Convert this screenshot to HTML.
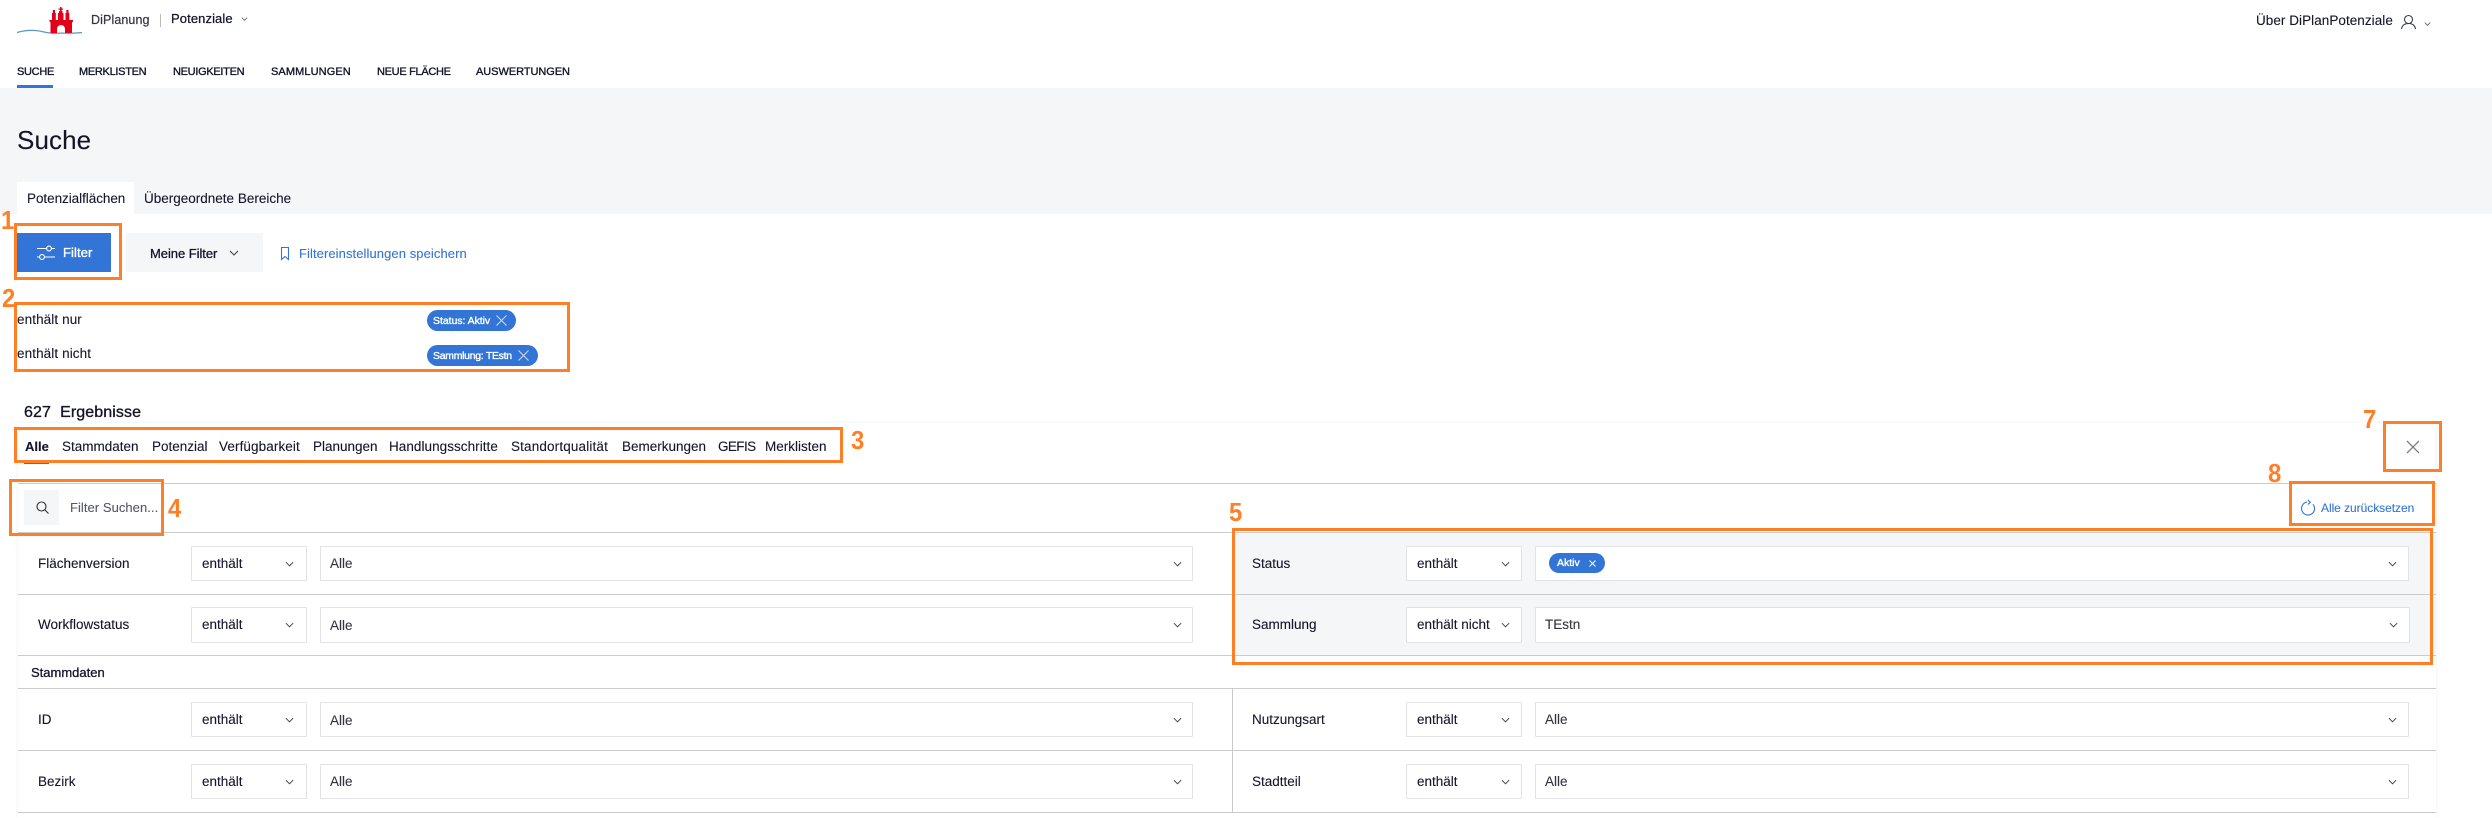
<!DOCTYPE html>
<html lang="de"><head><meta charset="utf-8"><title>Suche</title>
<style>
*{box-sizing:border-box}
html,body{margin:0;padding:0;background:#fff}
body{width:2492px;height:813px;position:relative;overflow:hidden;font-family:"Liberation Sans",sans-serif;color:#14152a;font-size:13.5px}
.a{position:absolute}
.t{position:absolute;white-space:nowrap;line-height:20px;height:20px;-webkit-text-stroke:.1px currentColor}
.nav{font-size:11px;-webkit-text-stroke:.35px #14152a;letter-spacing:-.3px}
.line{position:absolute;height:1px;background:#cbcbcb;left:18px;width:2418px}
.box{position:absolute;background:#fff;border:1px solid #e2e3e4;border-radius:1px}
.or{position:absolute;border:3px solid #ff7f27}
.n{position:absolute;color:#ff7f27;font-weight:700;font-size:26px;line-height:26px;white-space:nowrap;transform:scaleX(.92);transform-origin:left}
.chip{position:absolute;background:#3375d7;color:#fff;border-radius:11px}
svg.i{position:absolute;overflow:visible}
.g{color:#33343f}
</style></head><body>
<svg width="0" height="0" style="position:absolute"><defs><symbol id="c" viewBox="0 0 10 6"><path d="M1 1l4 4 4-4" fill="none" stroke="#444" stroke-width="1.1"/></symbol></defs></svg>

<!-- header -->
<div class="a" style="left:0;top:0;width:2492px;height:88px;background:#fff"></div>
<svg class="i" style="left:0;top:0" width="90" height="40" viewBox="0 0 90 40">
<path d="M17 32.500C24 30.500 32 30 38 30.800C45 32 49 33.500 56 33.300C64 32.800 74 33.800 82 32.500" fill="none" stroke="#5b93cc" stroke-width="1.200"/>
<path fill="#e2001a" d="M49.500 20h23.500v1.500l-1 1V33H65v-4a4 4 0 0 0-8 0v4H50.500V22.500l-1-1zM52 13h3.800v7H52zM58 13h5.500v7H58zM65.500 13h3.800v7h-3.800zM60 7h1.600v6.500H60zM58.500 8.500h4.600v1.300h-4.600zM52.800 10h2.200v3h-2.200zM66.300 10h2.200v3h-2.200zM59 11h3.500v2H59z"/>
</svg>
<span class="t g" style="left:91px;top:10px;font-size:12.5px;-webkit-text-stroke:.2px #33343f;letter-spacing:.1px">DiPlanung</span>
<div class="a" style="left:160px;top:14px;width:1px;height:13px;background:#bbb"></div>
<span class="t" style="left:171px;top:9px;font-size:13px;-webkit-text-stroke:.25px #14152a;letter-spacing:.1px">Potenziale</span>
<svg class="i" style="left:241px;top:17px" width="7" height="4"><use href="#c"/></svg>
<span class="t" style="left:2256px;top:11px;font-size:13.5px;letter-spacing:.05px">Über DiPlanPotenziale</span>
<svg class="i" style="left:2400px;top:14px" width="17" height="16" viewBox="0 0 17 16"><circle cx="8.5" cy="5.5" r="4" fill="none" stroke="#3a3b4d" stroke-width="1.1"/><path d="M1.5 15c.5-3.5 3-5.5 7-5.500s6.500 2 7 5.500" fill="none" stroke="#3a3b4d" stroke-width="1.1"/></svg>
<svg class="i" style="left:2424px;top:22px" width="7" height="4"><use href="#c"/></svg>

<span class="t nav" style="left:17px;top:62px">SUCHE</span>
<span class="t nav" style="left:79px;top:62px">MERKLISTEN</span>
<span class="t nav" style="left:173px;top:62px">NEUIGKEITEN</span>
<span class="t nav" style="left:271px;top:62px;letter-spacing:.1px">SAMMLUNGEN</span>
<span class="t nav" style="left:377px;top:62px">NEUE FLÄCHE</span>
<span class="t nav" style="left:476px;top:62px;letter-spacing:-.05px">AUSWERTUNGEN</span>
<div class="a" style="left:17px;top:85px;width:36px;height:3px;background:#3375d7"></div>

<!-- gray band -->
<div class="a" style="left:0;top:88px;width:2492px;height:126px;background:#f5f6f8"></div>
<span class="t" style="left:17px;top:127px;font-size:26px;line-height:26px;height:26px;letter-spacing:.1px">Suche</span>
<div class="a" style="left:17px;top:182px;width:117px;height:32px;background:#fff"></div>
<span class="t" style="left:27px;top:189px;font-size:13.5px;letter-spacing:-.05px">Potenzialflächen</span>
<span class="t" style="left:144px;top:189px;font-size:13.5px">Übergeordnete Bereiche</span>

<!-- filter buttons -->
<div class="a" style="left:17px;top:233px;width:94px;height:39px;background:#3375d7"></div>
<svg class="i" style="left:37px;top:245px" width="18" height="15" viewBox="0 0 18 15"><g fill="none" stroke="#fff" stroke-width="1.1"><path d="M0 3.500h9.500M14.500 3.500H18M0 12h2.500M7.500 12H18"/><circle cx="12" cy="3.500" r="2.400"/><circle cx="5" cy="12" r="2.400"/></g></svg>
<span class="t" style="left:63px;top:243px;color:#fff;font-size:13px;-webkit-text-stroke:.35px #fff;letter-spacing:.1px">Filter</span>
<div class="a" style="left:126px;top:233px;width:137px;height:39px;background:#f5f6f8"></div>
<span class="t" style="left:150px;top:244px;font-size:13px;-webkit-text-stroke:.3px #14152a;letter-spacing:-.05px">Meine Filter</span>
<svg class="i" style="left:229px;top:250px" width="10" height="6"><use href="#c"/></svg>
<svg class="i" style="left:280px;top:247px" width="10" height="13" viewBox="0 0 10 13"><path d="M1.500.5h7v12L5 9.500 1.500 12.500z" fill="none" stroke="#3375d7" stroke-width="1.1"/></svg>
<span class="t" style="left:299px;top:244px;color:#3375d7;font-size:13px;letter-spacing:.08px">Filtereinstellungen speichern</span>

<!-- active filter summary -->
<span class="t" style="left:17px;top:310px;letter-spacing:.1px">enthält nur</span>
<span class="t" style="left:17px;top:344px;letter-spacing:.1px">enthält nicht</span>
<div class="chip" style="left:427px;top:310px;width:89px;height:21px"></div>
<span class="t" style="left:433px;top:311px;color:#fff;font-size:10.500px;-webkit-text-stroke:.35px #fff;letter-spacing:-.05px">Status: Aktiv</span>
<svg class="i" style="left:496px;top:315px" width="11" height="11" viewBox="0 0 11 11"><path d="M.5.5l10 10M10.500.5l-10 10" stroke="#cfdcf2" fill="none"/></svg>
<div class="chip" style="left:427px;top:345px;width:111px;height:21px"></div>
<span class="t" style="left:433px;top:346px;color:#fff;font-size:10.500px;-webkit-text-stroke:.35px #fff;letter-spacing:-.3px">Sammlung: TEstn</span>
<svg class="i" style="left:518px;top:350px" width="11" height="11" viewBox="0 0 11 11"><path d="M.5.5l10 10M10.500.5l-10 10" stroke="#cfdcf2" fill="none"/></svg>

<span class="t" style="left:24px;top:403px;font-size:16px;-webkit-text-stroke:.35px #14152a;letter-spacing:.1px">627&nbsp; Ergebnisse</span>

<!-- panel -->
<div class="a" style="left:18px;top:423px;width:2418px;height:395px;background:#fff;box-shadow:0 0 4px rgba(0,0,0,.07)"></div>
<span class="t" style="left:25px;top:437px;font-weight:700;font-size:13px">Alle</span>
<span class="t" style="left:62px;top:437px">Stammdaten</span>
<span class="t" style="left:152px;top:437px">Potenzial</span>
<span class="t" style="left:219px;top:437px;letter-spacing:.1px">Verfügbarkeit</span>
<span class="t" style="left:313px;top:437px">Planungen</span>
<span class="t" style="left:389px;top:437px;letter-spacing:.05px">Handlungsschritte</span>
<span class="t" style="left:511px;top:437px;letter-spacing:.15px">Standortqualität</span>
<span class="t" style="left:622px;top:437px">Bemerkungen</span>
<span class="t" style="left:718px;top:437px;letter-spacing:-.6px">GEFIS</span>
<span class="t" style="left:765px;top:437px">Merklisten</span>
<div class="a" style="left:24px;top:462px;width:25px;height:2px;background:#3375d7"></div>

<div class="line" style="top:483px"></div>
<div class="a" style="left:24px;top:490px;width:35px;height:35px;background:#f5f6f8"></div>
<svg class="i" style="left:36px;top:501px" width="13" height="13" viewBox="0 0 13 13"><circle cx="5.500" cy="5.500" r="4.500" fill="none" stroke="#333" stroke-width="1.100"/><path d="M9 9l3.500 3.500" stroke="#333" stroke-width="1.100"/></svg>
<span class="t" style="left:70px;top:498px;color:#55566a;font-size:13px;letter-spacing:.05px">Filter Suchen...</span>

<!-- right highlighted rows -->
<div class="a" style="left:1234px;top:532px;width:1202px;height:123px;background:#f5f6f8"></div>
<div class="line" style="top:532px"></div>
<div class="line" style="top:594px"></div>
<div class="line" style="top:655px"></div>
<div class="line" style="top:688px"></div>
<div class="line" style="top:750px"></div>
<div class="line" style="top:812px"></div>
<div class="a" style="left:1232px;top:688px;width:1px;height:125px;background:#cbcbcb"></div>

<span class="t" style="left:31px;top:663px;font-size:13px;-webkit-text-stroke:.3px #14152a">Stammdaten</span>

<!-- left rows -->
<span class="t" style="left:38px;top:554px">Flächenversion</span>
<div class="box" style="left:191px;top:546px;width:116px;height:35px"></div>
<span class="t" style="left:202px;top:554px">enthält</span>
<svg class="i" style="left:285px;top:561px" width="9" height="6"><use href="#c"/></svg>
<div class="box" style="left:320px;top:546px;width:873px;height:35px"></div>
<span class="t g" style="left:330px;top:554px">Alle</span>
<svg class="i" style="left:1173px;top:561px" width="9" height="6"><use href="#c"/></svg>

<span class="t" style="left:38px;top:615px">Workflowstatus</span>
<div class="box" style="left:191px;top:607px;width:116px;height:36px"></div>
<span class="t" style="left:202px;top:615px">enthält</span>
<svg class="i" style="left:285px;top:622px" width="9" height="6"><use href="#c"/></svg>
<div class="box" style="left:320px;top:607px;width:873px;height:36px"></div>
<span class="t g" style="left:330px;top:616px">Alle</span>
<svg class="i" style="left:1173px;top:622px" width="9" height="6"><use href="#c"/></svg>

<span class="t" style="left:38px;top:710px">ID</span>
<div class="box" style="left:191px;top:702px;width:116px;height:35px"></div>
<span class="t" style="left:202px;top:710px">enthält</span>
<svg class="i" style="left:285px;top:717px" width="9" height="6"><use href="#c"/></svg>
<div class="box" style="left:320px;top:702px;width:873px;height:35px"></div>
<span class="t g" style="left:330px;top:711px">Alle</span>
<svg class="i" style="left:1173px;top:717px" width="9" height="6"><use href="#c"/></svg>

<span class="t" style="left:38px;top:772px">Bezirk</span>
<div class="box" style="left:191px;top:764px;width:116px;height:35px"></div>
<span class="t" style="left:202px;top:772px">enthält</span>
<svg class="i" style="left:285px;top:779px" width="9" height="6"><use href="#c"/></svg>
<div class="box" style="left:320px;top:764px;width:873px;height:35px"></div>
<span class="t g" style="left:330px;top:772px">Alle</span>
<svg class="i" style="left:1173px;top:779px" width="9" height="6"><use href="#c"/></svg>

<!-- right rows -->
<span class="t" style="left:1252px;top:554px">Status</span>
<div class="box" style="left:1406px;top:546px;width:116px;height:35px"></div>
<span class="t" style="left:1417px;top:554px">enthält</span>
<svg class="i" style="left:1501px;top:561px" width="9" height="6"><use href="#c"/></svg>
<div class="box" style="left:1535px;top:546px;width:874px;height:35px"></div>
<div class="chip" style="left:1549px;top:553px;width:56px;height:20px"></div>
<span class="t" style="left:1557px;top:553px;color:#fff;font-size:10.500px;-webkit-text-stroke:.35px #fff">Aktiv</span>
<svg class="i" style="left:1589px;top:560px" width="7" height="7" viewBox="0 0 7 7"><path d="M.5.5l6 6M6.500.5l-6 6" stroke="#fff" fill="none"/></svg>
<svg class="i" style="left:2388px;top:561px" width="9" height="6"><use href="#c"/></svg>

<span class="t" style="left:1252px;top:615px">Sammlung</span>
<div class="box" style="left:1406px;top:607px;width:116px;height:36px"></div>
<span class="t" style="left:1417px;top:615px">enthält nicht</span>
<svg class="i" style="left:1501px;top:622px" width="9" height="6"><use href="#c"/></svg>
<div class="box" style="left:1535px;top:607px;width:875px;height:36px"></div>
<span class="t g" style="left:1545px;top:615px">TEstn</span>
<svg class="i" style="left:2389px;top:622px" width="9" height="6"><use href="#c"/></svg>

<span class="t" style="left:1252px;top:710px">Nutzungsart</span>
<div class="box" style="left:1406px;top:702px;width:116px;height:35px"></div>
<span class="t" style="left:1417px;top:710px">enthält</span>
<svg class="i" style="left:1501px;top:717px" width="9" height="6"><use href="#c"/></svg>
<div class="box" style="left:1535px;top:702px;width:874px;height:35px"></div>
<span class="t g" style="left:1545px;top:710px">Alle</span>
<svg class="i" style="left:2388px;top:717px" width="9" height="6"><use href="#c"/></svg>

<span class="t" style="left:1252px;top:772px">Stadtteil</span>
<div class="box" style="left:1406px;top:764px;width:116px;height:35px"></div>
<span class="t" style="left:1417px;top:772px">enthält</span>
<svg class="i" style="left:1501px;top:779px" width="9" height="6"><use href="#c"/></svg>
<div class="box" style="left:1535px;top:764px;width:874px;height:35px"></div>
<span class="t g" style="left:1545px;top:772px">Alle</span>
<svg class="i" style="left:2388px;top:779px" width="9" height="6"><use href="#c"/></svg>

<!-- close + reset -->
<svg class="i" style="left:2406px;top:440px" width="14" height="14" viewBox="0 0 14 14"><path d="M1 1l12 12M13 1L1 13" stroke="#7a7b85" stroke-width="1.300" fill="none"/></svg>
<svg class="i" style="left:2300px;top:500px" width="16" height="17" viewBox="0 0 16 17"><path d="M13 4.300A6.500 6.500 0 1 1 7 2.100" fill="none" stroke="#3375d7" stroke-width="1.100"/><path d="M7.800 0L10.300 2.200 7.800 4.500" fill="none" stroke="#3375d7" stroke-width="1.100"/></svg>
<span class="t" style="left:2321px;top:498px;color:#3375d7;font-size:12px;letter-spacing:-.05px">Alle zurücksetzen</span>

<!-- annotations -->
<div class="or" style="left:14px;top:223px;width:108px;height:57px"></div>
<div class="or" style="left:14px;top:302px;width:556px;height:70px"></div>
<div class="or" style="left:14px;top:427px;width:829px;height:36px"></div>
<div class="or" style="left:9px;top:479px;width:155px;height:57px"></div>
<div class="or" style="left:1232px;top:528px;width:1201px;height:137px"></div>
<div class="or" style="left:2383px;top:421px;width:59px;height:51px"></div>
<div class="or" style="left:2289px;top:481px;width:146px;height:45px"></div>
<span class="n" style="left:1px;top:207px">1</span>
<span class="n" style="left:2px;top:285px">2</span>
<span class="n" style="left:851px;top:427px">3</span>
<span class="n" style="left:168px;top:495px">4</span>
<span class="n" style="left:1229px;top:499px">5</span>
<span class="n" style="left:2363px;top:406px">7</span>
<span class="n" style="left:2268px;top:460px">8</span>
</body></html>
